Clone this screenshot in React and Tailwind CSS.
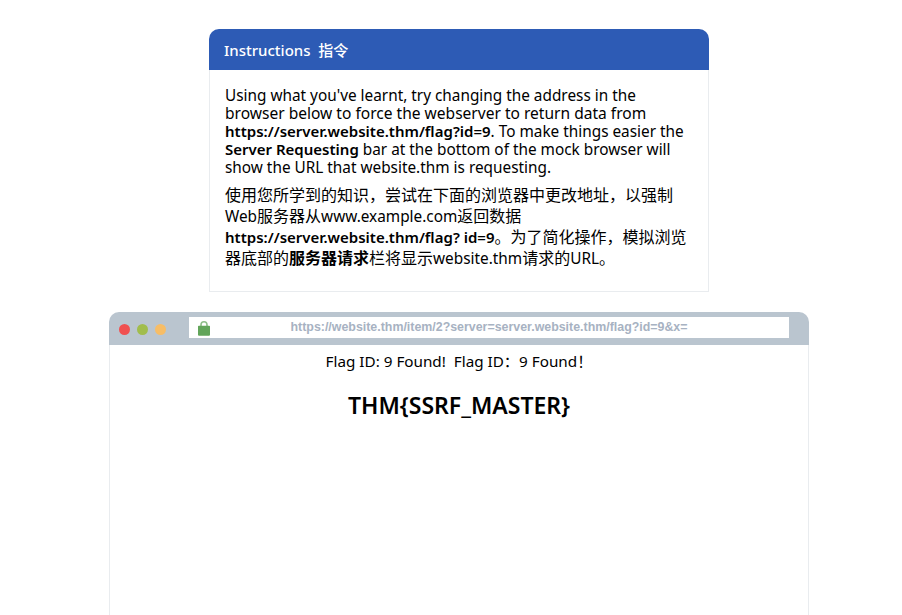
import React from 'react'

const sans = "font-['Noto_Sans','Noto_Sans_CJK_SC',sans-serif]"

const Latin = ({ children }) => <span className="text-[15.35px]">{children}</span>
const Strong = ({ children }) => <b className="font-semibold text-[15px]">{children}</b>

const InstructionCard = () => {
  return (
    <div className="w-[500px] mx-auto">
      <div className="h-[41px] bg-[#2d5bb5] rounded-t-[10px] pl-[15px] pt-[1px] flex items-center text-white text-[15px] font-medium">
        Instructions&nbsp; 指令
      </div>
      <div className="h-[222px] border border-t-0 border-[#e9ecef] pt-[16px] pl-[15px] pr-[15px] text-black">
        <p className="leading-[18px] whitespace-nowrap text-[15.35px]">
          Using what you've learnt, try changing the address in the
          <br />
          <span className="text-[15.55px]">browser below to force the webserver to return data from</span>
          <br />
          <Strong>https://server.website.thm/flag?id=9</Strong>. To make things easier the
          <br />
          <Strong>Server Requesting</Strong> bar at the bottom of the mock browser will
          <br />
          show the URL that website.thm is requesting.
        </p>
        <p className="mt-[9px] leading-[21px] whitespace-nowrap text-[16px]">
          使用您所学到的知识，尝试在下面的浏览器中更改地址，以强制
          <br />
          <Latin>Web</Latin>服务器从<Latin>www.example.com</Latin>返回数据
          <br />
          <Strong>https://server.website.thm/flag? id=9</Strong>。为了简化操作，模拟浏览
          <br />
          器底部的<b className="font-bold">服务器请求</b>栏将显示<Latin>website.thm</Latin>请求的<Latin>URL</Latin>。
        </p>
      </div>
    </div>
  )
}

const LockIcon = () => (
  <svg width="14" height="15" viewBox="0 0 14 15" className="absolute left-[8px] top-[4px]">
    <path d="M4 6V3.8a3 3 0 0 1 6 0V6" fill="none" stroke="#8fbf8a" strokeWidth="1.6" />
    <path d="M1.8 4.8h10.4a.8.8 0 0 1 .8.8v8.2a1 1 0 0 1-1 1H2a1 1 0 0 1-1-1V5.6a.8.8 0 0 1 .8-.8z" fill="#62a55a" />
  </svg>
)

const MockBrowser = () => {
  return (
    <div className="w-[700px] mx-auto mt-[20px] flex-1 flex flex-col">
      <div className="h-[33px] bg-[#bac5cf] rounded-t-[10px] flex items-start pt-[5px] pl-[10px] pr-[20px]">
        <div className="flex gap-[7px] mt-[7px]">
          <span className="w-[11px] h-[11px] rounded-full bg-[#f05050]" />
          <span className="w-[11px] h-[11px] rounded-full bg-[#a1bd4c]" />
          <span className="w-[11px] h-[11px] rounded-full bg-[#f7bd66]" />
        </div>
        <div className="ml-[23px] flex-1 h-[21px] bg-white flex items-center justify-center relative">
          <LockIcon />
          <span className="text-[12.4px] font-bold text-[#a7b2c2] font-['Liberation_Sans',sans-serif]">
            https://website.thm/item/2?server=server.website.thm/flag?id=9&amp;x=
          </span>
        </div>
      </div>
      <div className="flex-1 border-x border-[#e9ecef] text-center text-black">
        <div className="mt-[6px] text-[15.25px] leading-[21px]">Flag ID: 9 Found!&nbsp; Flag ID：9 Found！</div>
        <div className="mt-[17px] text-[23px] leading-[32px] font-semibold">THM{'{SSRF_MASTER}'}</div>
      </div>
    </div>
  )
}

export default function App() {
  return (
    <div className={`h-[615px] overflow-hidden bg-white pt-[29px] pl-[16px] flex flex-col ${sans}`}>
      <InstructionCard />
      <MockBrowser />
    </div>
  )
}
